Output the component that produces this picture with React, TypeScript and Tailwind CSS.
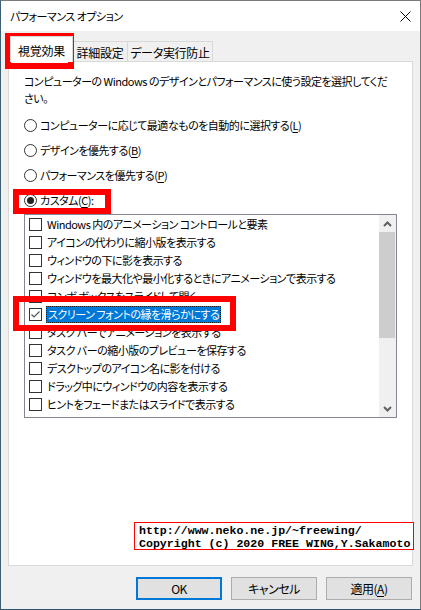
import React from "react";

const Checkbox = ({ checked }: { checked?: boolean }) => (
  <div className="w-[13px] h-[13px] border border-[#333333] bg-white shrink-0 flex items-center justify-center">
    {checked && (
      <svg width="11" height="11" viewBox="0 0 11 11">
        <polyline points="1.5,5.5 4,8 9.5,2.5" fill="none" stroke="#555555" strokeWidth="1.2" />
      </svg>
    )}
  </div>
);

const Radio = ({ checked }: { checked?: boolean }) => (
  <div className="w-[13px] h-[13px] rounded-full border border-[#333333] bg-white shrink-0 flex items-center justify-center">
    {checked && <div className="w-[7px] h-[7px] rounded-full bg-[#222222]" />}
  </div>
);

const items = [
  "Windows 内のアニメーション コントロールと要素",
  "アイコンの代わりに縮小版を表示する",
  "ウィンドウの下に影を表示する",
  "ウィンドウを最大化や最小化するときにアニメーションで表示する",
  "コンボ ボックスをスライドして開く",
  "スクリーン フォントの縁を滑らかにする",
  "タスク バーでアニメーションを表示する",
  "タスク バーの縮小版のプレビューを保存する",
  "デスクトップのアイコン名に影を付ける",
  "ドラッグ中にウィンドウの内容を表示する",
  "ヒントをフェードまたはスライドで表示する",
];

const RadioRow = ({ label, k, checked }: { label: string; k: string; checked?: boolean }) => (
  <div className="h-[25px] flex items-center pl-[15px]">
    <Radio checked={checked} />
    <span className="ml-[3px] whitespace-nowrap">
      {label}(<span className="underline underline-offset-2">{k}</span>){checked ? ":" : ""}
    </span>
  </div>
);

export default function App() {
  return (
    <div className="relative w-[421px] h-[610px] border-t border-r border-t-[#7a7a7a] border-r-[#7a7a7a] border-l border-b border-l-[#3d5f74] border-b-[#2d5670] flex flex-col text-[11px] leading-[17px] tracking-[-0.5px] text-black font-['Noto_Sans_CJK_JP','Noto_Sans',sans-serif] [font-feature-settings:'palt']">
      {/* Title bar */}
      <div className="h-[30px] bg-white flex items-center justify-between pl-[9px] pr-[10px] shrink-0">
        <span>パフォーマンス オプション</span>
        <svg width="11" height="11" viewBox="0 0 11 11" className="mr-[-1px]">
          <line x1="0.5" y1="0.5" x2="10.5" y2="10.5" stroke="#000" strokeWidth="1" />
          <line x1="10.5" y1="0.5" x2="0.5" y2="10.5" stroke="#000" strokeWidth="1" />
        </svg>
      </div>

      {/* Body */}
      <div className="flex-1 bg-[#f0f0f0] px-[7px] flex flex-col">
        {/* Tabs */}
        <div className="pt-[5px] h-[30px] flex items-end pl-[2px] shrink-0 text-[12px] tracking-[-0.3px]">
          <div className="relative z-10 -mb-px w-[63px] h-[26px] bg-white border border-b-0 border-[#d9d9d9] flex items-start justify-center pt-[5px]">
            視覚効果
          </div>
          <div className="w-[55px] h-[20px] border-t border-r border-[#d9d9d9] flex items-center justify-center pt-px">
            詳細設定
          </div>
          <div className="w-[85px] h-[20px] border-t border-r border-[#d9d9d9] flex items-center justify-center pt-px">
            データ実行防止
          </div>
        </div>

        {/* Panel */}
        <div className="h-[505px] bg-white border border-[#d9d9d9] shrink-0 flex flex-col">
          <div className="pl-[15px] pt-[11px]">
            <div className="whitespace-nowrap">コンピューターの Windows のデザインとパフォーマンスに使う設定を選択してくだ</div>
            <div>さい。</div>
          </div>
          <div className="mt-[6px]">
            <RadioRow label="コンピューターに応じて最適なものを自動的に選択する" k="L" />
            <RadioRow label="デザインを優先する" k="B" />
            <RadioRow label="パフォーマンスを優先する" k="P" />
            <RadioRow label="カスタム" k="C" checked />
          </div>

          {/* List box */}
          <div className="ml-[15px] mt-px w-[373px] h-[204px] border border-[#828790] flex overflow-hidden">
            <div className="flex-1 overflow-hidden">
              {items.map((t, i) => (
                <div key={i} className="h-[18px] flex items-center pl-[4px]">
                  <Checkbox checked={i === 5} />
                  {i === 5 ? (
                    <span className="ml-[4px] px-px h-[17px] leading-[15px] bg-[#0078d7] text-white border border-dotted border-[#222222] whitespace-nowrap">
                      {t}
                    </span>
                  ) : (
                    <span className="ml-[5px] whitespace-nowrap">{t}</span>
                  )}
                </div>
              ))}
            </div>
            <div className="w-[17px] bg-[#f0f0f0] flex flex-col shrink-0">
              <div className="h-[17px] flex items-center justify-center">
                <svg width="9" height="6" viewBox="0 0 9 6">
                  <polyline points="1,5 4.5,1.5 8,5" fill="none" stroke="#606060" strokeWidth="2" />
                </svg>
              </div>
              <div className="h-[106px] bg-[#cdcdcd] mr-px" />
              <div className="flex-1" />
              <div className="h-[17px] flex items-center justify-center">
                <svg width="9" height="6" viewBox="0 0 9 6">
                  <polyline points="1,1 4.5,4.5 8,1" fill="none" stroke="#606060" strokeWidth="2" />
                </svg>
              </div>
            </div>
          </div>
        </div>

        {/* Buttons */}
        <div className="mt-[11px] flex justify-end gap-[9px] pr-px text-[12px]">
          <button className="w-[86px] h-[23px] bg-[#e1e1e1] border-2 border-[#0078d7] flex items-center justify-center">
            OK
          </button>
          <button className="w-[86px] h-[23px] bg-[#e1e1e1] border border-[#adadad] flex items-center justify-center">
            キャンセル
          </button>
          <button className="w-[86px] h-[23px] bg-[#e1e1e1] border border-[#adadad] flex items-center justify-center">
            適用(<span className="underline underline-offset-2">A</span>)
          </button>
        </div>
      </div>

      {/* Red annotation boxes (overlays) */}
      <div className="absolute left-[4px] top-[32px] w-[69px] h-[36px] border-[6px] border-[#ff0000]" />
      <div className="absolute left-[12px] top-[188px] w-[98px] h-[25px] border-[6px] border-[#ff0000]" />
      <div className="absolute left-[12px] top-[295px] w-[223px] h-[35px] border-[6px] border-[#ff0000]" />

      {/* Copyright overlay */}
      <div className="absolute left-[133px] top-[521px] w-[280px] h-[28px] bg-white border border-[#ff0000] pl-[4px] font-['Liberation_Mono',monospace] font-bold text-[11.6px] leading-[13px] tracking-normal pt-px [font-feature-settings:normal]">
        <div className="whitespace-nowrap">http://www.neko.ne.jp/~freewing/</div>
        <div className="whitespace-nowrap">Copyright (c) 2020 FREE WING,Y.Sakamoto</div>
      </div>
    </div>
  );
}
